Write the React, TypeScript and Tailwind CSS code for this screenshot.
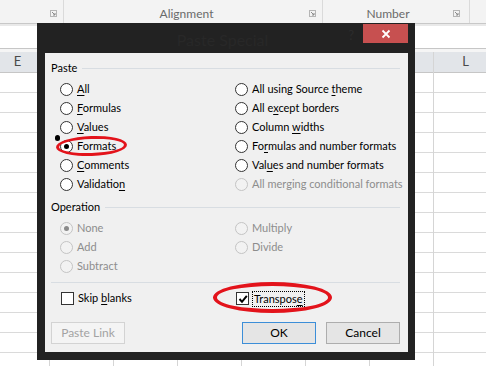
import type { ReactNode } from 'react';

const font = { fontFamily: 'Lato, "Noto Sans", Arial, sans-serif' };

const columns = ['E', 'F', 'G', 'H', 'I', 'J', 'K', 'L'];

function U({ text, u }: { text: string; u?: number }) {
  if (u === undefined) return <>{text}</>;
  return (
    <>
      {text.slice(0, u)}
      <span className="underline underline-offset-2">{text[u]}</span>
      {text.slice(u + 1)}
    </>
  );
}

function Radio({
  label,
  u,
  checked,
  disabled,
}: {
  label: string;
  u?: number;
  checked?: boolean;
  disabled?: boolean;
}) {
  return (
    <div className="flex h-[19px] items-center gap-1 whitespace-nowrap">
      <div
        className={`flex h-[13px] w-[13px] shrink-0 items-center justify-center rounded-full border ${
          disabled ? 'border-[#c4c4c4] bg-[#f2f2f2]' : 'border-[#333] bg-white'
        }`}
      >
        {checked && (
          <div className={`h-[5px] w-[5px] rounded-full ${disabled ? 'bg-[#8a8a8a]' : 'bg-black'}`} />
        )}
      </div>
      <span className={disabled ? 'text-[#8d8d8d]' : 'text-black'}>
        <U text={label} u={disabled ? undefined : u} />
      </span>
    </div>
  );
}

function Group({ title, children }: { title: string; children: ReactNode }) {
  return (
    <div>
      <div className="flex h-[14px] items-center gap-[5px]">
        <span>{title}</span>
        <div className="h-px flex-1 bg-[#d8dde2]" />
      </div>
      {children}
    </div>
  );
}

function Button({ children, variant }: { children: ReactNode; variant?: 'ok' | 'off' }) {
  const look =
    variant === 'ok'
      ? 'border-[#3c8ed8] bg-[#e5e5e5] text-black'
      : variant === 'off'
        ? 'border-[#d3d3d3] bg-[#f4f4f4] text-[#a3a3a3]'
        : 'border-[#adadad] bg-[#e5e5e5] text-black';
  return (
    <div className={`flex h-[22px] w-[74px] items-center justify-center border text-[12px] ${look}`}>
      {children}
    </div>
  );
}

function Launcher() {
  return (
    <svg width="7" height="7" viewBox="0 0 7 7">
      <rect x="0.5" y="0.5" width="6" height="6" fill="none" stroke="#b5b5b5" />
      <path d="M2 2 L5 5 M5 3 V5 H3" stroke="#8a8a8a" fill="none" />
    </svg>
  );
}

export default function App() {
  return (
    <div className="relative h-[366px] w-[486px] overflow-hidden bg-white text-[11px]" style={font}>
      {/* ribbon */}
      <div className="flex h-[24px] border-b border-[#c8c8c8] bg-[#f3f3f3] text-[12px] text-[#6a6a6a]">
        <div className="flex w-[64px] items-end justify-end border-r border-[#dadada] pb-[6px] pr-[6px]">
          <Launcher />
        </div>
        <div className="flex w-[259px] items-end border-r border-[#dadada]">
          <span className="flex-1 text-center">Alignment</span>
          <span className="pb-[6px] pr-[6px]">
            <Launcher />
          </span>
        </div>
        <div className="flex w-[147px] items-end border-r border-[#dadada]">
          <span className="flex-1 text-center">Number</span>
          <span className="pb-[6px] pr-[9px]">
            <Launcher />
          </span>
        </div>
      </div>
      <div className="h-[2px] bg-[#e9e9e9]" />
      <div className="h-[23px] border-b border-[#c6c6c6] bg-white" />
      <div className="h-[3px] bg-[#f5f5f5]" />

      {/* sheet */}
      <div className="ml-[-14px] flex">
        {columns.map(c => (
          <div key={c} className="w-16 shrink-0 border-r border-[#d5d5d5]">
            <div className="flex h-[21px] items-center justify-center border-b border-[#c6c6c6] bg-[#e2e5e9] text-[13px] text-[#4a4a4a]">
              {c}
            </div>
            {Array.from({ length: 15 }).map((_, i) => (
              <div key={i} className="h-[20px] border-b border-[#dadada]" />
            ))}
          </div>
        ))}
      </div>

      {/* dialog */}
      <div className="absolute left-[37px] top-[23px] flex h-[337px] w-[378px] flex-col bg-[#222222]">
        <div className="flex h-[30px]">
          <div className="flex-1" />
          <div className="whitespace-nowrap pt-[5px] text-[16px] text-[#282828]">Paste Special</div>
          <div className="flex flex-1 items-start justify-end pr-[7px] pt-[1px]">
            <span className="mr-[9px] pt-[2px] text-[13px] text-[#2c2c2c]">?</span>
            <div className="flex h-[19px] w-[45px] items-center justify-center bg-[#c75050]">
              <svg width="10" height="10" viewBox="0 0 10 10">
                <path d="M1.5 1.5 L8.5 8.5 M8.5 1.5 L1.5 8.5" stroke="#fff" strokeWidth="1.8" />
              </svg>
            </div>
          </div>
        </div>

        <div className="ml-[8px] mr-[7px] flex h-[299px] flex-col bg-[#f0f0f0] pl-[6px] pr-[8px] pt-[8px]">
          <Group title="Paste">
            <div className="mt-[5px] grid grid-cols-[175px_1fr] pl-[9px]">
              <div>
                <Radio label="All" u={0} />
                <Radio label="Formulas" u={0} />
                <Radio label="Values" u={0} />
                <Radio label="Formats" u={5} checked />
                <Radio label="Comments" u={0} />
                <Radio label="Validation" u={9} />
              </div>
              <div>
                <Radio label="All using Source theme" u={17} />
                <Radio label="All except borders" u={5} />
                <Radio label="Column widths" u={7} />
                <Radio label="Formulas and number formats" u={2} />
                <Radio label="Values and number formats" u={3} />
                <Radio label="All merging conditional formats" disabled />
              </div>
            </div>
          </Group>

          <div className="mt-[6px]">
            <Group title="Operation">
              <div className="mt-[5px] grid grid-cols-[175px_1fr] pl-[9px]">
                <div>
                  <Radio label="None" checked disabled />
                  <Radio label="Add" disabled />
                  <Radio label="Subtract" disabled />
                </div>
                <div>
                  <Radio label="Multiply" disabled />
                  <Radio label="Divide" disabled />
                </div>
              </div>
            </Group>
          </div>

          <div className="mt-[6px] h-px bg-[#d8dde2]" />

          <div className="mt-[6px] grid grid-cols-[175px_1fr] pl-[10px]">
            <div className="flex h-[19px] items-center gap-1">
              <div className="h-[13px] w-[13px] border border-[#333] bg-white" />
              <span>
                <U text="Skip blanks" u={5} />
              </span>
            </div>
            <div className="flex h-[19px] items-center gap-[3px]">
              <div className="flex h-[13px] w-[13px] items-center justify-center border border-[#333] bg-white">
                <svg width="10" height="10" viewBox="0 0 10 10">
                  <path d="M1.5 5 L4 7.8 L8.8 1.8" stroke="#000" strokeWidth="2" fill="none" />
                </svg>
              </div>
              <span className="border border-dotted border-black px-px leading-[14px]">
                <U text="Transpose" u={8} />
              </span>
            </div>
          </div>

          <div className="mt-[14px] flex">
            <Button variant="off">Paste Link</Button>
            <div className="ml-[117px] flex gap-[10px]">
              <Button variant="ok">OK</Button>
              <Button>Cancel</Button>
            </div>
          </div>
        </div>
      </div>

      {/* hand-drawn marks */}
      <div className="absolute left-[55px] top-[135px] h-[6px] w-[5px] rounded-full bg-black" />
      <div className="absolute left-[56px] top-[136px] h-[20px] w-[71px] rotate-[-2deg] rounded-[50%] border-[3px] border-[#e3131b]" />
      <div className="absolute left-[213px] top-[282px] h-[31px] w-[119px] rounded-[50%] border-[4px] border-[#e3131b]" />
    </div>
  );
}
